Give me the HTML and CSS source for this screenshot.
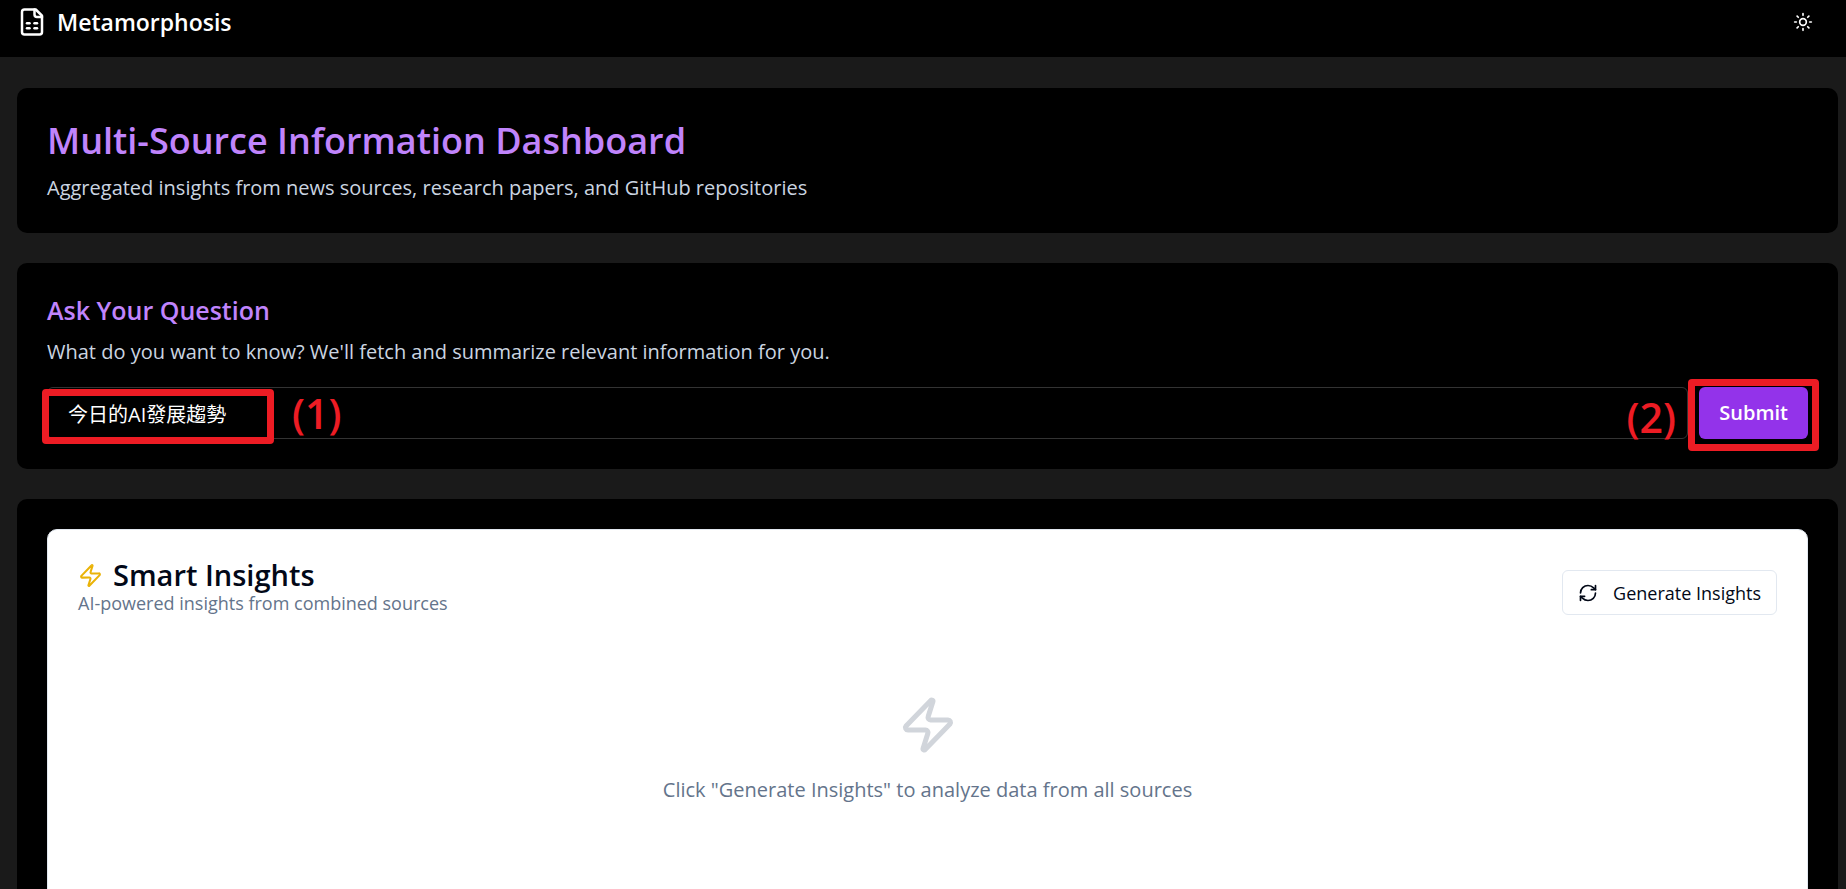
FILE: index.html
```
<!DOCTYPE html>
<html lang="en">
<head>
<meta charset="utf-8">
<title>Metamorphosis</title>
<link rel="stylesheet" href="styles.css">
</head>
<body>
<header class="topbar">
  <a class="brand" href="#">
    <svg class="brand-icon" viewBox="0 0 24 24" aria-hidden="true"><path d="M15 2H6a2 2 0 0 0-2 2v16a2 2 0 0 0 2 2h12a2 2 0 0 0 2-2V7Z"/><path d="M14 2v4a2 2 0 0 0 2 2h4"/><path d="M8 13h2"/><path d="M14 13h2"/><path d="M8 17h2"/><path d="M14 17h2"/></svg>
    <span>Metamorphosis</span>
  </a>
  <button class="theme-toggle" type="button" aria-label="Toggle theme">
    <svg viewBox="0 0 24 24" aria-hidden="true"><circle cx="12" cy="12" r="4"/><path d="M12 2v2"/><path d="M12 20v2"/><path d="m4.93 4.93 1.41 1.41"/><path d="m17.66 17.66 1.41 1.41"/><path d="M2 12h2"/><path d="M20 12h2"/><path d="m6.34 17.66-1.41 1.41"/><path d="m19.07 4.93-1.41 1.41"/></svg>
  </button>
</header>
<main class="page">
  <section class="card">
    <h1 class="page-title">Multi-Source Information Dashboard</h1>
    <p class="lead">Aggregated insights from news sources, research papers, and GitHub repositories</p>
  </section>
  <section class="card ask">
    <h2 class="ask-title">Ask Your Question</h2>
    <label class="lead" for="question">What do you want to know? We'll fetch and summarize relevant information for you.</label>
    <form class="ask-form">
      <input class="question" id="question" type="text" value="今日的AI發展趨勢">
      <button class="submit" type="button">Submit</button>
      <span class="mark mark-question"></span>
      <span class="step step-question">(1)</span>
      <span class="step step-submit">(2)</span>
      <span class="mark mark-submit"></span>
    </form>
  </section>
  <section class="card">
    <div class="insights">
      <div class="insights-head">
        <div>
          <h2 class="insights-title">
            <svg class="zap" viewBox="0 0 24 24" aria-hidden="true"><path d="M4 14a1 1 0 0 1-.78-1.63l9.9-10.2a.5.5 0 0 1 .86.46l-1.92 6.02A1 1 0 0 0 13 10h7a1 1 0 0 1 .78 1.63l-9.9 10.2a.5.5 0 0 1-.86-.46l1.92-6.02A1 1 0 0 0 11 14z"/></svg>
            Smart Insights
          </h2>
          <p class="insights-sub">AI-powered insights from combined sources</p>
        </div>
        <button class="generate" type="button">
          <svg viewBox="0 0 24 24" aria-hidden="true"><path d="M3 12a9 9 0 0 1 9-9 9.75 9.75 0 0 1 6.74 2.74L21 8"/><path d="M21 3v5h-5"/><path d="M21 12a9 9 0 0 1-9 9 9.75 9.75 0 0 1-6.74-2.74L3 16"/><path d="M8 16H3v5"/></svg>
          Generate Insights
        </button>
      </div>
      <div class="empty">
        <svg class="zap-large" viewBox="0 0 24 24" aria-hidden="true"><path d="M4 14a1 1 0 0 1-.78-1.63l9.9-10.2a.5.5 0 0 1 .86.46l-1.92 6.02A1 1 0 0 0 13 10h7a1 1 0 0 1 .78 1.63l-9.9 10.2a.5.5 0 0 1-.86-.46l1.92-6.02A1 1 0 0 0 11 14z"/></svg>
        <p>Click "Generate Insights" to analyze data from all sources</p>
      </div>
    </div>
  </section>
</main>
</body>
</html>
```

FILE: styles.css
```
* { box-sizing: border-box; }

html, body { height: 100%; }

body {
  margin: 0;
  display: flex;
  flex-direction: column;
  overflow: hidden;
  background: #1a1a1a;
  color: #fff;
  font-family: "Open Sans", "Noto Sans CJK TC", sans-serif;
  font-size: 20px;
  line-height: 30px;
}

h1, h2, p { margin: 0; }

button, input { font: inherit; color: inherit; }

svg {
  fill: none;
  stroke: currentColor;
  stroke-width: 2;
  stroke-linecap: round;
  stroke-linejoin: round;
}

.topbar {
  flex: none;
  display: flex;
  align-items: center;
  justify-content: space-between;
  height: 57px;
  padding: 0 33px 14px 17px;
  background: #000;
}

.brand {
  display: flex;
  align-items: center;
  gap: 10px;
  color: #fff;
  font-size: 23px;
  font-weight: 600;
  text-decoration: none;
}

.brand-icon { width: 30px; height: 30px; }

.theme-toggle {
  display: flex;
  padding: 0;
  border: 0;
  background: none;
}

.theme-toggle svg { width: 20px; height: 20px; }

.page {
  flex: 1;
  display: flex;
  flex-direction: column;
  gap: 30px;
  min-height: 0;
  padding: 31px 8px 0 17px;
}

.card {
  flex: none;
  padding: 30px;
  border-radius: 10px;
  background: #000;
}

.page-title {
  margin-bottom: 10px;
  color: #c084fc;
  font-size: 36px;
  font-weight: 600;
  line-height: 45px;
}

.lead {
  display: block;
  color: #cbd5e1;
}

.ask-title {
  margin-bottom: 10px;
  color: #c084fc;
  font-size: 25px;
  font-weight: 600;
  line-height: 34px;
}

.ask-form {
  position: relative;
  display: flex;
  gap: 11px;
  margin-top: 20px;
}

.question {
  flex: 1;
  min-width: 0;
  height: 52px;
  padding: 0 20px;
  border: 1px solid #333;
  border-radius: 6px;
  background: #000;
  font-family: "Open Sans", "Noto Sans CJK TC", sans-serif;
}

.submit {
  height: 52px;
  padding: 0 20px;
  border: 0;
  border-radius: 6px;
  background: #9333ea;
  font-weight: 600;
}

.mark {
  position: absolute;
  border: 7px solid #ed1c24;
  border-radius: 4px;
  pointer-events: none;
}

.mark-question { left: -5px; top: 2px; width: 232px; height: 55px; }

.mark-submit { right: -11px; top: -8px; width: 131px; height: 72px; }

.step {
  position: absolute;
  color: #ed1c24;
  font-size: 41px;
  font-weight: 600;
  line-height: 52px;
}

.step-question { left: 245px; top: 0; }

.step-submit { right: 132px; top: 4px; }

.insights {
  min-height: 420px;
  padding: 29px 30px;
  border: 1px solid #e2e8f0;
  border-radius: 10px;
  background: #fff;
  color: #020817;
}

.insights-head {
  display: flex;
  align-items: flex-end;
  justify-content: space-between;
}

.insights-title {
  display: flex;
  align-items: center;
  gap: 10px;
  font-size: 29px;
  font-weight: 600;
  line-height: 32px;
}

.zap { width: 25px; height: 25px; color: #eab308; }

.insights-sub {
  color: #64748b;
  font-size: 18px;
  line-height: 24px;
}

.generate {
  display: flex;
  align-items: center;
  gap: 15px;
  height: 45px;
  padding: 0 15px;
  border: 1px solid #e2e8f0;
  border-radius: 6px;
  background: #fff;
  font-size: 18px;
}

.generate svg { width: 20px; height: 20px; }

.empty {
  display: flex;
  flex-direction: column;
  align-items: center;
  gap: 20px;
  padding-top: 80px;
  color: #64748b;
}

.zap-large { width: 60px; height: 60px; color: #d1d5db; }
```
